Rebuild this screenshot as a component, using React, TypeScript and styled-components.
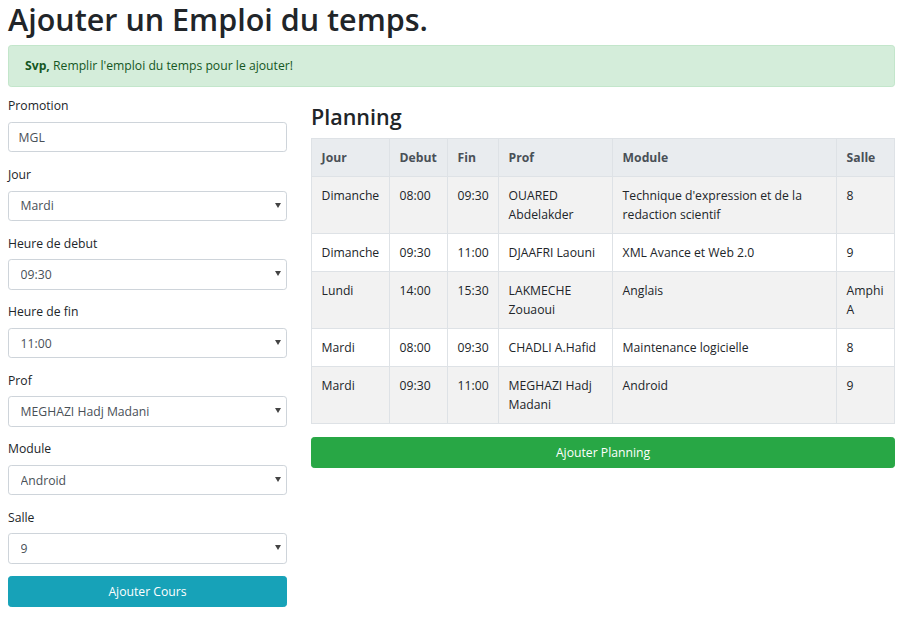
import React from "react";
import styled, { createGlobalStyle } from "styled-components";

const Global = createGlobalStyle`
  html, body { margin: 0; padding: 0; background: #fff; }
  body {
    font-family: "Open Sans", "Noto Sans", sans-serif;
    font-size: 12.2px;
    line-height: 1.5;
    color: #212529;
  }
  * { box-sizing: border-box; }
`;

const Page = styled.div`
  padding: 0 11px 0 8px;
`;

const Title = styled.h1`
  margin: 0 0 6.4px;
  font-size: 30.5px;
  line-height: 38.4px;
  font-weight: 600;
  color: #212529;
`;

const Alert = styled.div`
  background: #d4edda;
  border: 1px solid #c3e6cb;
  color: #155724;
  border-radius: 3.2px;
  padding: 10.4px 16px;
  margin-bottom: 9.6px;
  line-height: 19.2px;
`;

const Columns = styled.div`
  display: grid;
  grid-template-columns: 279px 1fr;
  column-gap: 24px;
  align-items: start;
`;

const Form = styled.form`
  display: flex;
  flex-direction: column;
`;

const Group = styled.div`
  margin-bottom: 12.6px;
`;

const Label = styled.label`
  display: block;
  margin-bottom: 6.4px;
  line-height: 19.2px;
  color: #212529;
`;

const fieldCss = `
  display: block;
  width: 100%;
  height: 30.4px;
  padding: 4.8px 9.6px;
  font-family: inherit;
  font-size: 12.2px;
  line-height: 19.2px;
  color: #495057;
  background: #fff;
  border: 1px solid #ced4da;
  border-radius: 3.2px;
  outline: none;
`;

const Input = styled.input`
  ${fieldCss}
`;

const SelectWrap = styled.div`
  position: relative;
`;

const Select = styled.select`
  ${fieldCss}
  appearance: none;
  -webkit-appearance: none;
  padding-left: 11.6px;
`;

const Caret = styled.svg`
  position: absolute;
  right: 6px;
  top: 12px;
  width: 6px;
  height: 5px;
  pointer-events: none;
`;

const Button = styled.button<{ $tone: "info" | "success" }>`
  display: block;
  width: 100%;
  height: 30.4px;
  border: 1px solid ${(p) => (p.$tone === "info" ? "#17a2b8" : "#28a745")};
  background: ${(p) => (p.$tone === "info" ? "#17a2b8" : "#28a745")};
  color: #fff;
  font-family: inherit;
  font-size: 12.2px;
  line-height: 19.2px;
  border-radius: 3.2px;
  padding: 4.8px 9.6px;
  cursor: pointer;
`;

const Right = styled.section`
  padding-top: 8px;
`;

const SubTitle = styled.h3`
  margin: 0 0 6.4px;
  font-size: 21.5px;
  line-height: 26.9px;
  font-weight: 600;
  color: #212529;
`;

const Table = styled.table`
  width: 100%;
  border-collapse: collapse;
  table-layout: fixed;
  margin-bottom: 13.5px;
`;

const Th = styled.th`
  text-align: left;
  padding: 9px 9.6px;
  line-height: 19px;
  font-weight: 700;
  color: #495057;
  background: #e9ecef;
  border: 1px solid #dee2e6;
  vertical-align: top;
`;

const Tr = styled.tr<{ $striped: boolean }>`
  background: ${(p) => (p.$striped ? "#f2f2f2" : "#fff")};
`;

const Td = styled.td`
  padding: 9px 9.6px;
  line-height: 19px;
  border: 1px solid #dee2e6;
  vertical-align: top;
  color: #212529;
`;

const widths = [78, 58, 51, 114, 224, 58];
const heads = ["Jour", "Debut", "Fin", "Prof", "Module", "Salle"];
const rows = [
  ["Dimanche", "08:00", "09:30", "OUARED Abdelakder", "Technique d'expression et de la redaction scientif", "8"],
  ["Dimanche", "09:30", "11:00", "DJAAFRI Laouni", "XML Avance et Web 2.0", "9"],
  ["Lundi", "14:00", "15:30", "LAKMECHE Zouaoui", "Anglais", "Amphi A"],
  ["Mardi", "08:00", "09:30", "CHADLI A.Hafid", "Maintenance logicielle", "8"],
  ["Mardi", "09:30", "11:00", "MEGHAZI Hadj Madani", "Android", "9"],
];

const selects: { label: string; value: string }[] = [
  { label: "Jour", value: "Mardi" },
  { label: "Heure de debut", value: "09:30" },
  { label: "Heure de fin", value: "11:00" },
  { label: "Prof", value: "MEGHAZI Hadj Madani" },
  { label: "Module", value: "Android" },
  { label: "Salle", value: "9" },
];

function SelectField({ label, value }: { label: string; value: string }) {
  return (
    <Group>
      <Label>{label}</Label>
      <SelectWrap>
        <Select defaultValue={value}>
          <option value={value}>{value}</option>
        </Select>
        <Caret viewBox="0 0 6 5">
          <path d="M0 0 H6 L3 5 Z" fill="#444" />
        </Caret>
      </SelectWrap>
    </Group>
  );
}

export default function App() {
  return (
    <Page>
      <Global />
      <Title>Ajouter un Emploi du temps.</Title>
      <Alert>
        <strong>Svp,</strong> Remplir l'emploi du temps pour le ajouter!
      </Alert>
      <Columns>
        <Form onSubmit={(e) => e.preventDefault()}>
          <Group>
            <Label>Promotion</Label>
            <Input defaultValue="MGL" />
          </Group>
          {selects.map((s) => (
            <SelectField key={s.label} label={s.label} value={s.value} />
          ))}
          <Button type="button" $tone="info">Ajouter Cours</Button>
        </Form>
        <Right>
          <SubTitle>Planning</SubTitle>
          <Table>
            <colgroup>
              {widths.map((w, i) => (
                <col key={i} style={{ width: w }} />
              ))}
            </colgroup>
            <thead>
              <tr>
                {heads.map((h) => (
                  <Th key={h}>{h}</Th>
                ))}
              </tr>
            </thead>
            <tbody>
              {rows.map((r, i) => (
                <Tr key={i} $striped={i % 2 === 0}>
                  {r.map((c, j) => (
                    <Td key={j}>{c}</Td>
                  ))}
                </Tr>
              ))}
            </tbody>
          </Table>
          <Button type="button" $tone="success">Ajouter Planning</Button>
        </Right>
      </Columns>
    </Page>
  );
}
